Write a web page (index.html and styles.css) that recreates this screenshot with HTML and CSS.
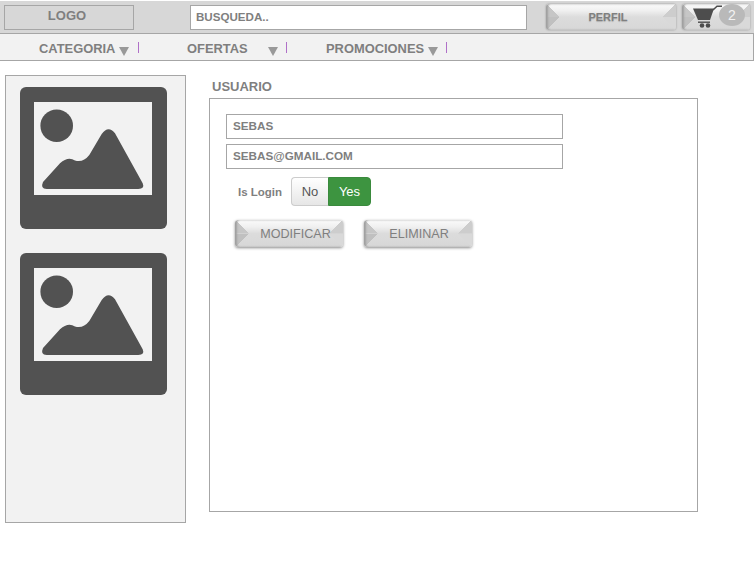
FILE: index.html
```html
<!DOCTYPE html>
<html lang="es">
<head>
    <meta charset="UTF-8">
    <meta name="viewport" content="width=device-width, initial-scale=1.0">
    <title>Usuario</title>
    <link rel="stylesheet" href="styles.css">
</head>
<body>
<header class="topbar">
    <div class="logo">LOGO</div>
    <input class="search" type="text" value="BUSQUEDA..">
    <button class="bevel perfil" type="button">PERFIL</button>
    <button class="bevel cart" type="button">
        <svg class="cart-icon" viewBox="0 0 31 23" width="31" height="23">
            <path d="M1 3.5H22L18 15H6Z" fill="#4d4d4d"/>
            <path d="M21 5L25 1.2H30" fill="none" stroke="#4d4d4d" stroke-width="1.5"/>
            <path d="M6 17.2H18" stroke="#4d4d4d" stroke-width="1.4"/>
            <circle cx="10" cy="20.5" r="2.3" fill="#4d4d4d"/>
            <circle cx="16" cy="20.5" r="2.3" fill="#4d4d4d"/>
        </svg>
        <span class="badge">2</span>
    </button>
</header>
<nav class="menu">
    <div class="menu-item">CATEGORIA<span class="arrow"></span><span class="sep"></span></div>
    <div class="menu-item menu-item-wide">OFERTAS<span class="arrow"></span><span class="sep"></span></div>
    <div class="menu-item">PROMOCIONES<span class="arrow"></span><span class="sep"></span></div>
</nav>
<div class="page">
    <aside class="sidebar">
        <svg class="thumb" viewBox="0 0 147 142" width="147" height="142">
            <rect width="147" height="142" rx="6" fill="#525252"/>
            <rect x="14" y="15" width="118" height="93" fill="#f2f2f2"/>
            <circle cx="36.7" cy="38.7" r="16.3" fill="#525252"/>
            <path d="M26.7 102H118.3Q125 102 122.7 96.3L95 46.3Q88.3 38 81.7 47L69.3 68Q63 76 55 73.5Q48 69 40 76.3L23 95Q20 102 26.7 102Z" fill="#525252"/>
        </svg>
        <svg class="thumb" viewBox="0 0 147 142" width="147" height="142">
            <rect width="147" height="142" rx="6" fill="#525252"/>
            <rect x="14" y="15" width="118" height="93" fill="#f2f2f2"/>
            <circle cx="36.7" cy="38.7" r="16.3" fill="#525252"/>
            <path d="M26.7 102H118.3Q125 102 122.7 96.3L95 46.3Q88.3 38 81.7 47L69.3 68Q63 76 55 73.5Q48 69 40 76.3L23 95Q20 102 26.7 102Z" fill="#525252"/>
        </svg>
    </aside>
    <main class="content">
        <h2 class="title">USUARIO</h2>
        <form class="panel">
            <input class="field" type="text" value="SEBAS">
            <input class="field" type="text" value="SEBAS@GMAIL.COM">
            <div class="login-row">
                <span class="login-label">Is Login</span>
                <div class="toggle">
                    <span class="toggle-no">No</span>
                    <span class="toggle-yes">Yes</span>
                </div>
            </div>
            <div class="actions">
                <button class="bevel action modificar" type="button">MODIFICAR</button>
                <button class="bevel action eliminar" type="button">ELIMINAR</button>
            </div>
        </form>
    </main>
</div>
</body>
</html>
```

FILE: styles.css
```css
* {
    box-sizing: border-box;
}

body {
    font-family: "Liberation Sans", Arial, sans-serif;
    margin: 0;
    padding-top: 1px;
    background-color: #fff;
    color: #7f7f7f;
}

.topbar {
    display: flex;
    align-items: flex-start;
    height: 33px;
    padding: 3px 4px 0 4px;
    background-color: #d7d7d7;
    border-bottom: 1px solid #a6a6a6;
}

.logo {
    width: 130px;
    height: 25px;
    margin-top: 1px;
    border: 1px solid #a6a6a6;
    font-size: 13px;
    font-weight: bold;
    line-height: 20px;
    padding-right: 4px;
    text-align: center;
}

.search {
    width: 337px;
    height: 25px;
    margin: 1px 0 0 56px;
    padding: 0 5px 2px;
    border: 1px solid #a6a6a6;
    background-color: #fff;
    color: #7f7f7f;
    font-family: inherit;
    font-size: 11.6px;
    font-weight: bold;
}

/* boton con biseles hechos con gradientes */
.bevel {
    display: flex;
    align-items: center;
    justify-content: center;
    padding: 0;
    border: none;
    border-radius: 3px;
    font-family: inherit;
    color: #7f7f7f;
    background:
        linear-gradient(to top right, #c6c6c6 50%, transparent 50%) left top / 14px 50% no-repeat,
        linear-gradient(to bottom right, #c0c0c0 50%, transparent 50%) left bottom / 14px 50% no-repeat,
        linear-gradient(to top left, #cdcdcd 50%, transparent 50%) right top / 14px 50% no-repeat,
        linear-gradient(to bottom left, #d9d9d9 50%, transparent 50%) right bottom / 14px 50% no-repeat,
        linear-gradient(#fbfbfb 0, #f0f0f0 25%, #dcdcdc 50%, #d7d7d7 100%);
    box-shadow: 0 0 2px #8f8f8f, inset 2px 0 2px #a0a0a0;
}

.perfil {
    width: 130px;
    height: 26px;
    margin-left: 19px;
    padding-right: 6px;
    font-size: 11px;
    font-weight: bold;
    text-shadow: 0 1px 1px #b0b0b0;
}

.cart {
    position: relative;
    width: 68px;
    height: 26px;
    margin-left: 6px;
}

.cart-icon {
    position: absolute;
    left: 10px;
    top: 1px;
}

.badge {
    position: absolute;
    right: 5px;
    top: 0;
    width: 26px;
    height: 22px;
    border-radius: 50%;
    background-color: #b9b9b9;
    color: #f2f2f2;
    font-size: 14px;
    line-height: 22px;
    text-align: center;
}

.menu {
    display: grid;
    grid-template-columns: 148px 139px auto;
    height: 27px;
    padding: 7px 0 0 39px;
    background-color: #f2f2f2;
    border-right: 1px solid #a6a6a6;
    border-bottom: 1px solid #a6a6a6;
    font-size: 12.9px;
    font-weight: bold;
    line-height: 15px;
}

.menu-item {
    display: flex;
    align-items: flex-start;
}

.arrow {
    width: 0;
    height: 0;
    margin: 6px 0 0 4px;
    border-left: 5.5px solid transparent;
    border-right: 5.5px solid transparent;
    border-top: 9px solid #999;
}

.menu-item-wide .arrow {
    margin-left: 20px;
}

.sep {
    width: 1px;
    height: 11px;
    margin: 1px 0 0 8px;
    background-color: #b070c8;
}

.menu-item:first-child .sep {
    margin-left: 9px;
}

.page {
    display: flex;
    align-items: flex-start;
    padding: 14px 0 0 5px;
}

.sidebar {
    display: flex;
    flex-direction: column;
    gap: 24px;
    width: 181px;
    height: 448px;
    padding: 11px 0 0 14px;
    background-color: #f2f2f2;
    border: 1px solid #a6a6a6;
}

.thumb {
    display: block;
}

.content {
    width: 489px;
    margin-left: 23px;
}

.title {
    height: 23px;
    margin: 0;
    padding: 4px 0 0 3px;
    font-size: 13px;
    font-weight: bold;
    line-height: 15px;
}

.panel {
    display: flex;
    flex-direction: column;
    align-items: flex-start;
    height: 414px;
    padding: 15px 0 0 16px;
    border: 1px solid #a6a6a6;
}

.field {
    width: 337px;
    height: 25px;
    margin-bottom: 5px;
    padding: 0 6px 2px;
    border: 1px solid #a6a6a6;
    color: #7f7f7f;
    font-family: inherit;
    font-size: 11.7px;
    font-weight: bold;
}

.login-row {
    display: flex;
    align-items: center;
    margin: 3px 0 0 12px;
}

.login-label {
    width: 53px;
    font-size: 11.5px;
    font-weight: bold;
}

.toggle {
    display: flex;
    height: 29px;
    font-size: 13px;
    line-height: 27px;
    text-align: center;
}

.toggle-no {
    width: 37px;
    border: 1px solid #ccc;
    border-right: none;
    border-radius: 4px 0 0 4px;
    background: linear-gradient(#fff, #e6e6e6);
    color: #555;
}

.toggle-yes {
    width: 43px;
    border: 1px solid #3a8a3d;
    border-radius: 0 4px 4px 0;
    background-color: #3d9440;
    color: #fff;
}

.actions {
    display: flex;
    gap: 21px;
    margin: 14px 0 0 9px;
}

.action {
    width: 108px;
    height: 27px;
    font-size: 12.6px;
    box-shadow: 0 1px 3px #8a8a8a, inset 2px 0 2px #a0a0a0;
}

.modificar {
    padding-left: 13px;
}

.eliminar {
    padding-left: 2px;
}
```
